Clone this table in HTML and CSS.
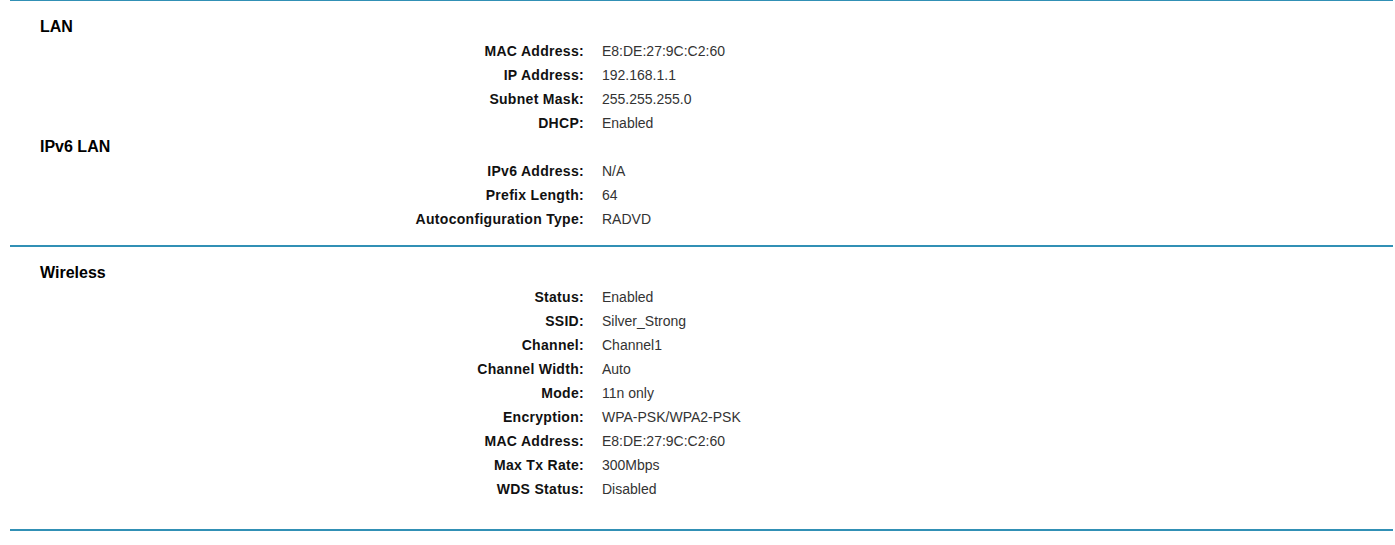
FILE: index.html
```html
<!DOCTYPE html>
<html>
<head>
<meta charset="utf-8">
<link rel="stylesheet" href="styles.css">
</head>
<body>
<div class="panel">
  <section class="block first">
    <h3 class="title">LAN</h3>
    <div class="rows">
      <div class="label">MAC Address:</div><div class="value">E8:DE:27:9C:C2:60</div>
      <div class="label">IP Address:</div><div class="value">192.168.1.1</div>
      <div class="label">Subnet Mask:</div><div class="value">255.255.255.0</div>
      <div class="label">DHCP:</div><div class="value">Enabled</div>
    </div>
    <h3 class="title">IPv6 LAN</h3>
    <div class="rows">
      <div class="label">IPv6 Address:</div><div class="value">N/A</div>
      <div class="label">Prefix Length:</div><div class="value">64</div>
      <div class="label">Autoconfiguration Type:</div><div class="value">RADVD</div>
    </div>
  </section>
  <section class="block last">
    <h3 class="title">Wireless</h3>
    <div class="rows">
      <div class="label">Status:</div><div class="value">Enabled</div>
      <div class="label">SSID:</div><div class="value">Silver_Strong</div>
      <div class="label">Channel:</div><div class="value">Channel1</div>
      <div class="label">Channel Width:</div><div class="value">Auto</div>
      <div class="label">Mode:</div><div class="value">11n only</div>
      <div class="label">Encryption:</div><div class="value">WPA-PSK/WPA2-PSK</div>
      <div class="label">MAC Address:</div><div class="value">E8:DE:27:9C:C2:60</div>
      <div class="label">Max Tx Rate:</div><div class="value">300Mbps</div>
      <div class="label">WDS Status:</div><div class="value">Disabled</div>
    </div>
  </section>
</div>
</body>
</html>
```
FILE: styles.css
```css
html, body {
  margin: 0;
  padding: 0;
  background: #ffffff;
}
body {
  font-family: Arial, "Liberation Sans", sans-serif;
  font-size: 14px;
  color: #333333;
}
.panel {
  margin: 0 2px 0 10px;
}
.block {
  border-top: 2px solid #3190b5;
  padding: 14px 0 14px 30px;
}
.block.first {
  border-top-width: 1px;
}
.block.last {
  border-bottom: 2px solid #3190b5;
  padding-bottom: 28px;
}
.title {
  margin: 1px 0 1px 0;
  font-size: 16px;
  font-weight: bold;
  line-height: 22px;
  color: #000000;
}
.rows {
  display: grid;
  grid-template-columns: 544px 1fr;
  line-height: 24px;
}
.label {
  text-align: right;
  font-weight: bold;
  color: #111111;
  letter-spacing: 0.3px;
}
.value {
  padding-left: 18px;
  color: #333333;
}
```
